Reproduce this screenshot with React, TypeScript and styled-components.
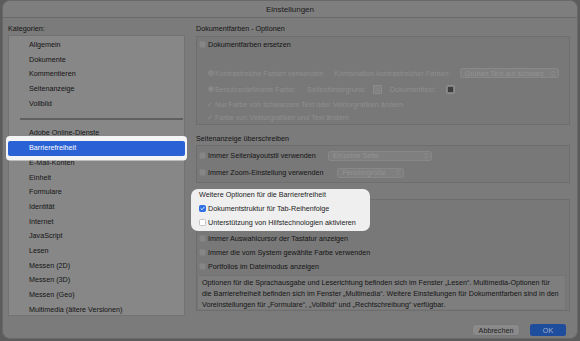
import styled, { createGlobalStyle } from "styled-components";

const GlobalStyle = createGlobalStyle`
  html, body {
    margin: 0;
    padding: 0;
    background: #5c5c5c;
  }
  body {
    font-family: "Liberation Sans", Arial, sans-serif;
    font-size: 7.2px;
    color: #141414;
  }
`;

const Page = styled.div`
  width: 580px;
  height: 341px;
  padding: 0 2px 2px;
  box-sizing: border-box;
`;

const Window = styled.div`
  height: 339px;
  box-sizing: border-box;
  background: #7b7b7b;
  border: 1px solid #686868;
  border-radius: 8px;
  display: flex;
  flex-direction: column;
`;

const TitleBar = styled.div`
  height: 16px;
  flex: none;
  display: flex;
  align-items: center;
  justify-content: center;
  background: #7e7e7e;
  border-bottom: 1px solid #6a6a6a;
  border-radius: 7px 7px 0 0;
  font-size: 8px;
  color: #1a1a1a;
`;

const Body = styled.div`
  display: grid;
  grid-template-columns: 177px 1fr;
  column-gap: 11px;
  padding: 5px 7px 0 5px;
  align-items: start;
`;

const Caption = styled.div`
  height: 12px;
  line-height: 12px;
  white-space: nowrap;
`;

const ListBox = styled.div`
  height: 281px;
  box-sizing: border-box;
  background: #878787;
  border: 1px solid #727272;
  padding-top: 2px;
`;

const ListItem = styled.div<{ $selected?: boolean }>`
  height: 14.7px;
  line-height: 14.7px;
  padding-left: 20px;
  white-space: nowrap;
  position: relative;
  ${(p) =>
    p.$selected &&
    `
    z-index: 1;
    margin: 0 -1px;
    padding-left: 21px;
    background: #2a62d6;
    color: #ffffff;
    border-radius: 2px;
    box-shadow: 0 0 0 2px #f4f4f4, 0 -3px 0 2px #f4f4f4, 0 2.5px 0 2px #f4f4f4;
  `}
`;

const Separator = styled.div`
  height: 15px;
  display: flex;
  align-items: center;
  padding: 0 1px 0 11px;
  &::after {
    content: "";
    flex: 1;
    height: 2px;
    background: #606060;
  }
`;

const Main = styled.div`
  display: flex;
  flex-direction: column;
`;

const GroupBox = styled.div<{ $gap?: number }>`
  margin-top: ${(p) => p.$gap ?? 1}px;
  background: #787878;
  border: 1px solid #6e6e6e;
  padding: 1px 0 1px 2px;
`;

const SectionCaption = styled(Caption)`
  margin-top: 8px;
`;

const Row = styled.div<{ $h: number; $dim?: boolean; $indent?: number }>`
  height: ${(p) => p.$h}px;
  display: flex;
  align-items: center;
  white-space: nowrap;
  padding-left: ${(p) => p.$indent ?? 0}px;
  color: ${(p) => (p.$dim ? "#8f8f8f" : "inherit")};
`;

const Gap = styled.span<{ $w: number }>`
  display: inline-block;
  width: ${(p) => p.$w}px;
  flex: none;
`;

const CheckBox = styled.span<{ $lit?: boolean; $checked?: boolean }>`
  width: 7px;
  height: 7px;
  box-sizing: border-box;
  flex: none;
  margin-right: 2px;
  border-radius: 1.5px;
  display: inline-flex;
  align-items: center;
  justify-content: center;
  background: ${(p) => (p.$checked ? "#2f6fe4" : p.$lit ? "#ffffff" : "#868686")};
  border: 0.5px solid ${(p) => (p.$checked ? "#2f6fe4" : p.$lit ? "#c4c4c4" : "#7f7f7f")};
`;

const Radio = styled.span<{ $on?: boolean }>`
  width: 6px;
  height: 6px;
  box-sizing: border-box;
  flex: none;
  margin-right: 1px;
  border-radius: 50%;
  background: #828282;
  border: 0.5px solid #898989;
  display: inline-flex;
  align-items: center;
  justify-content: center;
  &::after {
    content: "";
    width: 2px;
    height: 2px;
    border-radius: 50%;
    background: ${(p) => (p.$on ? "#929292" : "transparent")};
  }
`;

const Tick = styled.span`
  width: 8px;
  flex: none;
`;

const Select = styled.span<{ $w: number }>`
  width: ${(p) => p.$w}px;
  height: 10px;
  box-sizing: border-box;
  flex: none;
  display: inline-flex;
  align-items: center;
  justify-content: space-between;
  padding: 0 3px 0 4px;
  border: 1px solid #888888;
  border-radius: 2.5px;
  background: #7f7f7f;
  color: #939393;
`;

const Swatch = styled.span<{ $fill: string }>`
  width: 9px;
  height: 9px;
  box-sizing: border-box;
  flex: none;
  border: 1px solid #8c8c8c;
  border-radius: 1px;
  background: ${(p) => p.$fill};
  box-shadow: inset 0 0 0 1px #7f7f7f;
`;

const Spotlight = styled.div`
  position: relative;
  z-index: 1;
  width: 179px;
  box-sizing: border-box;
  margin: -12px 0 0 -8px;
  padding: 0 0 2px 8px;
  background: #efefef;
  border-radius: 7px;
  color: #222222;
`;

const InfoBox = styled.div`
  margin: 2px 3px 0 -2px;
  padding: 0.5px 4px 0;
  height: 34px;
  box-sizing: border-box;
  line-height: 11px;
  white-space: nowrap;
  background: #7e7e7e;
  border: 1px solid #747474;
  border-bottom: none;
`;

const ButtonBar = styled.div`
  margin-top: 13px;
  height: 12px;
  display: flex;
  align-items: center;
  justify-content: flex-end;
  gap: 11px;
  padding-right: 4px;
`;

const Button = styled.span<{ $primary?: boolean }>`
  display: inline-flex;
  align-items: center;
  justify-content: center;
  width: ${(p) => (p.$primary ? 36 : 46)}px;
  height: ${(p) => (p.$primary ? 12 : 10)}px;
  border-radius: 2.5px;
  background: ${(p) => (p.$primary ? "#1e4d9d" : "#8a8a8a")};
  color: ${(p) => (p.$primary ? "#a3b1cf" : "#1c1c1c")};
  box-shadow: ${(p) => (p.$primary ? "none" : "0 0 0 0.5px #767676")};
`;

const Arrows = () => (
  <svg width="4" height="7" viewBox="0 0 4 7" fill="none">
    <path d="M0.6 2.6 L2 1.2 L3.4 2.6 M0.6 4.4 L2 5.8 L3.4 4.4" stroke="#939393" strokeWidth="0.8" />
  </svg>
);

const CheckGlyph = () => (
  <svg width="5" height="5" viewBox="0 0 5 5" fill="none">
    <path d="M0.9 2.6 L2 3.7 L4.1 1.2" stroke="#ffffff" strokeWidth="0.9" strokeLinecap="round" strokeLinejoin="round" />
  </svg>
);

const topItems = ["Allgemein", "Dokumente", "Kommentieren", "Seitenanzeige", "Vollbild"];
const bottomItems = [
  "Adobe Online-Dienste",
  "Barrierefreiheit",
  "E-Mail-Konten",
  "Einheit",
  "Formulare",
  "Identität",
  "Internet",
  "JavaScript",
  "Lesen",
  "Messen (2D)",
  "Messen (3D)",
  "Messen (Geo)",
  "Multimedia (ältere Versionen)",
];

export default function App() {
  return (
    <Page>
      <GlobalStyle />
      <Window>
        <TitleBar>Einstellungen</TitleBar>
        <Body>
          <div>
            <Caption>Kategorien:</Caption>
            <ListBox>
              {topItems.map((t) => (
                <ListItem key={t}>{t}</ListItem>
              ))}
              <Separator />
              {bottomItems.map((t) => (
                <ListItem key={t} $selected={t === "Barrierefreiheit"}>
                  {t}
                </ListItem>
              ))}
            </ListBox>
          </div>

          <Main>
            <Caption>Dokumentfarben - Optionen</Caption>
            <GroupBox>
              <Row $h={13}>
                <CheckBox />
                Dokumentfarben ersetzen
              </Row>
              <Row $h={14} />
              <Row $h={16} $dim $indent={9}>
                <Radio />
                Kontrastreiche Farben verwenden
                <Gap $w={11} />
                Kombination kontrastreicher Farben:
                <Gap $w={9} />
                <Select $w={99}>
                  Grünen Text auf schwarz
                  <Arrows />
                </Select>
              </Row>
              <Row $h={16} $dim $indent={9}>
                <Radio $on />
                Benutzerdefinierte Farbe:
                <Gap $w={11} />
                Seitenhintergrund:
                <Gap $w={7} />
                <Swatch $fill="#848484" />
                <Gap $w={8} />
                Dokumenttext:
                <Gap $w={10} />
                <Swatch $fill="#3c3c3c" />
              </Row>
              <Row $h={15} $dim $indent={8}>
                <Tick>✓</Tick>
                Nur Farbe von schwarzem Text oder Vektorgrafiken ändern
              </Row>
              <Row $h={11} $dim $indent={8}>
                <Tick>✓</Tick>
                Farbe von Vektorgrafiken und Text ändern
              </Row>
            </GroupBox>

            <SectionCaption>Seitenanzeige überschreiben</SectionCaption>
            <GroupBox $gap={0}>
              <Row $h={17}>
                <CheckBox />
                Immer Seitenlayoutstil verwenden
                <Gap $w={12} />
                <Select $w={104}>
                  Einzelne Seite
                  <Arrows />
                </Select>
              </Row>
              <Row $h={17}>
                <CheckBox />
                Immer Zoom-Einstellung verwenden
                <Gap $w={14} />
                <Select $w={67}>
                  Fenstergröße
                  <Arrows />
                </Select>
              </Row>
            </GroupBox>

            <GroupBox $gap={16}>
              <Spotlight>
                <Caption>Weitere Optionen für die Barrierefreiheit</Caption>
                <Row $h={14}>
                  <CheckBox $lit $checked>
                    <CheckGlyph />
                  </CheckBox>
                  Dokumentstruktur für Tab-Reihenfolge
                </Row>
                <Row $h={14}>
                  <CheckBox $lit />
                  Unterstützung von Hilfstechnologien aktivieren
                </Row>
              </Spotlight>
              <Row $h={14}>
                <CheckBox />
                Immer Auswahlcursor der Tastatur anzeigen
              </Row>
              <Row $h={14}>
                <CheckBox />
                Immer die vom System gewählte Farbe verwenden
              </Row>
              <Row $h={14}>
                <CheckBox />
                Portfolios im Dateimodus anzeigen
              </Row>
              <InfoBox>
                Optionen für die Sprachausgabe und Leserichtung befinden sich im Fenster „Lesen“. Multimedia-Optionen für
                <br />
                die Barrierefreiheit befinden sich im Fenster „Multimedia“. Weitere Einstellungen für Dokumentfarben sind in den
                <br />
                Voreinstellungen für „Formulare“, „Vollbild“ und „Rechtschreibung“ verfügbar.
              </InfoBox>
            </GroupBox>

            <ButtonBar>
              <Button>Abbrechen</Button>
              <Button $primary>OK</Button>
            </ButtonBar>
          </Main>
        </Body>
      </Window>
    </Page>
  );
}
